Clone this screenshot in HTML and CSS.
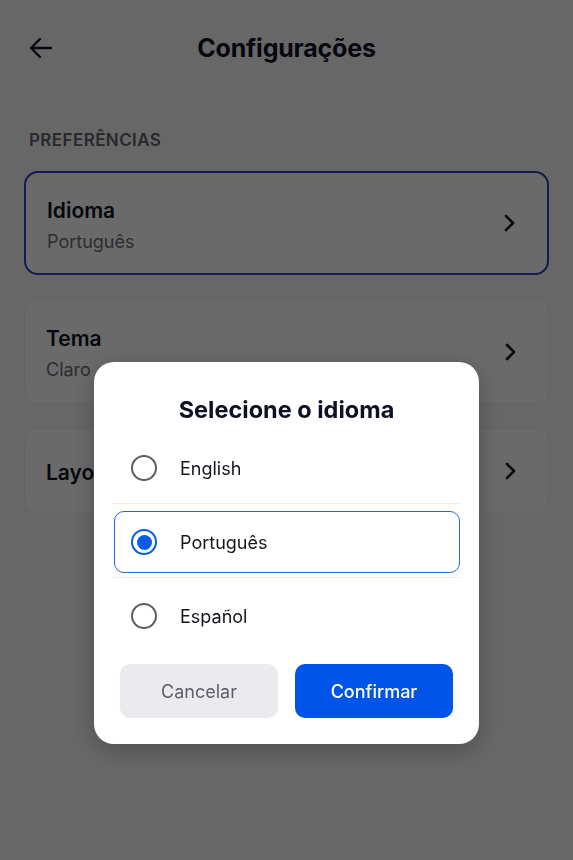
FILE: index.html
```html
<!DOCTYPE html>
<html lang="pt">
<head>
    <meta charset="UTF-8">
    <meta name="viewport" content="width=device-width, initial-scale=1.0">
    <title>Configurações</title>
    <link rel="stylesheet" href="styles.css">
</head>
<body>
    <div class="screen">
        <header class="topbar">
            <button class="back" aria-label="Voltar">
                <svg width="26" height="26" viewBox="0 0 26 26" fill="none" stroke="currentColor" stroke-width="2.4" stroke-linecap="round" stroke-linejoin="round">
                    <path d="M23 13H3M12 4l-9 9 9 9"/>
                </svg>
            </button>
            <h1>Configurações</h1>
        </header>

        <div class="section-label">PREFERÊNCIAS</div>

        <div class="settings">
            <div class="setting active">
                <div class="setting-text">
                    <div class="setting-name">Idioma</div>
                    <div class="setting-value">Português</div>
                </div>
                <svg class="chev" width="14" height="20" viewBox="0 0 14 20" fill="none" stroke="currentColor" stroke-width="2.6" stroke-linecap="round" stroke-linejoin="round">
                    <path d="M4 3l7 7-7 7"/>
                </svg>
            </div>
            <div class="setting">
                <div class="setting-text">
                    <div class="setting-name">Tema</div>
                    <div class="setting-value">Claro</div>
                </div>
                <svg class="chev" width="14" height="20" viewBox="0 0 14 20" fill="none" stroke="currentColor" stroke-width="2.6" stroke-linecap="round" stroke-linejoin="round">
                    <path d="M4 3l7 7-7 7"/>
                </svg>
            </div>
            <div class="setting single">
                <div class="setting-text">
                    <div class="setting-name">Layout</div>
                </div>
                <svg class="chev" width="14" height="20" viewBox="0 0 14 20" fill="none" stroke="currentColor" stroke-width="2.6" stroke-linecap="round" stroke-linejoin="round">
                    <path d="M4 3l7 7-7 7"/>
                </svg>
            </div>
        </div>
    </div>

    <div class="overlay"></div>

    <div class="dialog">
        <h2>Selecione o idioma</h2>
        <div class="options">
            <div class="option">
                <span class="radio"></span>
                <span>English</span>
            </div>
            <div class="divider"></div>
            <div class="option selected">
                <span class="radio"></span>
                <span>Português</span>
            </div>
            <div class="divider"></div>
            <div class="option">
                <span class="radio"></span>
                <span>Español</span>
            </div>
        </div>
        <div class="actions">
            <button class="btn cancel">Cancelar</button>
            <button class="btn confirm">Confirmar</button>
        </div>
    </div>
</body>
</html>
```

FILE: styles.css
```css
* {
    box-sizing: border-box;
}
body {
    margin: 0;
    font-family: Inter, "Noto Sans", sans-serif;
    background-color: #f8f8fa;
    color: #111322;
    width: 573px;
    height: 860px;
    overflow: hidden;
}
.screen {
    padding: 0 24px;
}
.topbar {
    height: 96px;
    display: flex;
    align-items: center;
    justify-content: center;
    position: relative;
}
.topbar h1 {
    margin: 0;
    font-size: 25px;
    font-weight: 700;
    letter-spacing: -0.2px;
}
.back {
    position: absolute;
    left: 4px;
    top: 35px;
    background: none;
    border: none;
    padding: 0;
    color: #111322;
    display: flex;
}
.section-label {
    margin: 34px 0 0 5px;
    font-size: 17px;
    font-weight: 600;
    color: #5f636c;
    letter-spacing: 0.4px;
}
.settings {
    margin-top: 21px;
    display: flex;
    flex-direction: column;
    gap: 24px;
}
.setting {
    height: 105px;
    border: 1.5px solid #f0f0f2;
    border-radius: 14px;
    background-color: #ffffff;
    display: flex;
    align-items: center;
    padding: 0 31px 0 21px;
}
.setting.active {
    height: 104px;
    border: 2px solid #2a46c0;
}
.setting.single {
    height: 86px;
}
.setting-text {
    flex: 1;
}
.setting-name {
    font-size: 21px;
    font-weight: 600;
    margin-top: 3px;
}
.setting-value {
    font-size: 18px;
    color: #6b6e76;
    margin-top: 8px;
}
.single .setting-name {
    margin-top: 3px;
}
.chev {
    color: #111322;
}
.overlay {
    position: fixed;
    inset: 0;
    background-color: rgba(0, 0, 0, 0.585);
}
.dialog {
    position: fixed;
    left: 94px;
    top: 362px;
    width: 385px;
    height: 382px;
    background-color: #ffffff;
    border-radius: 20px;
    padding: 33px 19px 26px;
    box-shadow: 0 6px 24px rgba(0, 0, 0, 0.25);
}
.dialog h2 {
    margin: 0;
    text-align: center;
    font-size: 23.5px;
    font-weight: 700;
    line-height: 30px;
    color: #0e1124;
}
.options {
    margin-top: 12px;
}
.option {
    height: 62px;
    display: flex;
    align-items: center;
    gap: 23px;
    padding-left: 16px;
    font-size: 18px;
    color: #15161c;
    border: 1.5px solid transparent;
    border-radius: 10px;
    margin: 0 0 0 1px;
    width: 346px;
}
.option.selected {
    border-color: #2467ea;
}
.radio {
    width: 26px;
    height: 26px;
    border-radius: 50%;
    border: 2.5px solid #5c5f66;
    display: flex;
    align-items: center;
    justify-content: center;
}
.selected .radio {
    border-color: #0a5ce8;
}
.selected .radio::after {
    content: "";
    width: 15px;
    height: 15px;
    border-radius: 50%;
    background-color: #0a5ce8;
}
.divider {
    height: 1px;
    background-color: #ececf0;
    margin: 4px 0 7px;
}
.actions {
    margin-top: 17px;
    padding: 0 7px;
    display: flex;
    gap: 17px;
}
.btn {
    flex: 1;
    height: 54px;
    border: none;
    border-radius: 10px;
    font-family: Inter, "Noto Sans", sans-serif;
    font-size: 18px;
}
.cancel {
    background-color: #ebebef;
    color: #5d5f68;
}
.confirm {
    background-color: #0055e8;
    color: #ffffff;
    font-weight: 500;
}
```
